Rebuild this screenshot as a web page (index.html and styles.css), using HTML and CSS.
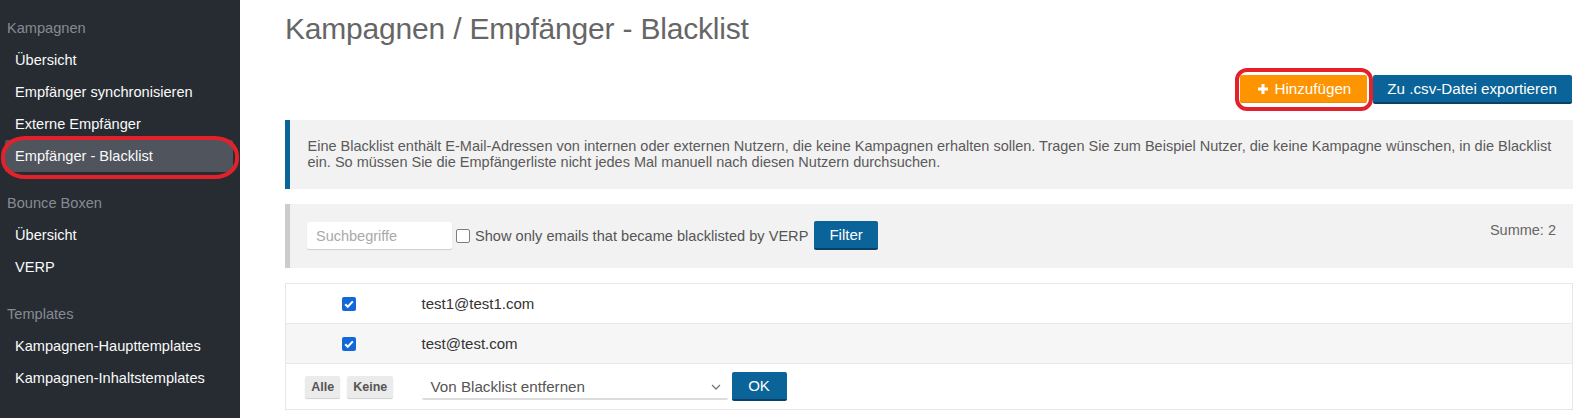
FILE: index.html
```html
<!DOCTYPE html>
<html lang="de">
<head>
<meta charset="utf-8">
<title>Kampagnen / Empfänger - Blacklist</title>
<link rel="stylesheet" href="styles.css">
</head>
<body>
<aside class="sidebar">
  <div class="section">
    <div class="sec-title">Kampagnen</div>
    <a class="nav-item">Übersicht</a>
    <a class="nav-item">Empfänger synchronisieren</a>
    <a class="nav-item">Externe Empfänger</a>
    <a class="nav-item active">Empfänger - Blacklist<span class="mark mark-nav"></span></a>
  </div>
  <div class="section">
    <div class="sec-title">Bounce Boxen</div>
    <a class="nav-item">Übersicht</a>
    <a class="nav-item">VERP</a>
  </div>
  <div class="section">
    <div class="sec-title">Templates</div>
    <a class="nav-item">Kampagnen-Haupttemplates</a>
    <a class="nav-item">Kampagnen-Inhaltstemplates</a>
  </div>
</aside>
<main class="main">
  <h1 class="title">Kampagnen / Empfänger - Blacklist</h1>
  <div class="actions">
    <button class="btn btn-orange"><svg class="plus" width="10" height="10" viewBox="0 0 10 10"><rect x="3.5" y="0" width="3" height="10" fill="#fff"/><rect x="0" y="3.5" width="10" height="3" fill="#fff"/></svg>Hinzufügen<span class="mark mark-btn"></span></button>
    <button class="btn btn-blue btn-export">Zu .csv-Datei exportieren</button>
  </div>
  <div class="info">Eine Blacklist enthält E-Mail-Adressen von internen oder externen Nutzern, die keine Kampagnen erhalten sollen. Tragen Sie zum Beispiel Nutzer, die keine Kampagne wünschen, in die Blacklist ein. So müssen Sie die Empfängerliste nicht jedes Mal manuell nach diesen Nutzern durchsuchen.</div>
  <div class="filter">
    <input class="search" type="text" placeholder="Suchbegriffe">
    <span class="cb cb-empty"></span>
    <span class="cb-label">Show only emails that became blacklisted by VERP</span>
    <button class="btn btn-blue btn-filter">Filter</button>
    <span class="total">Summe: 2</span>
  </div>
  <table class="list">
    <tr class="row">
      <td class="col-check"><span class="cb cb-checked"><svg width="14" height="14" viewBox="0 0 14 14"><path d="M3.2 7.2 L5.8 9.8 L10.8 4.4" fill="none" stroke="#fff" stroke-width="2"/></svg></span></td>
      <td class="col-mail">test1@test1.com</td>
    </tr>
    <tr class="row row-alt">
      <td class="col-check"><span class="cb cb-checked"><svg width="14" height="14" viewBox="0 0 14 14"><path d="M3.2 7.2 L5.8 9.8 L10.8 4.4" fill="none" stroke="#fff" stroke-width="2"/></svg></span></td>
      <td class="col-mail">test@test.com</td>
    </tr>
    <tr class="row row-actions">
      <td class="col-check"><div class="mini-group"><button class="mini">Alle</button><button class="mini">Keine</button></div></td>
      <td class="col-mail">
        <div class="bulk">
          <div class="select">Von Blacklist entfernen<svg class="chev" width="10" height="6" viewBox="0 0 10 6"><path d="M1 1 L5 5 L9 1" fill="none" stroke="#777" stroke-width="1.3"/></svg></div>
          <button class="btn btn-blue btn-ok">OK</button>
        </div>
      </td>
    </tr>
  </table>
</main>
</body>
</html>
```
FILE: styles.css
```css
* { box-sizing: border-box; }
html, body { margin: 0; padding: 0; }
body {
  display: flex;
  width: 1594px;
  height: 418px;
  overflow: hidden;
  font-family: "Liberation Sans", Arial, sans-serif;
  font-size: 14.5px;
  color: #555;
  background: #fff;
}
.sidebar {
  width: 240px;
  flex: none;
  background: #272c33;
  padding-top: 12px;
}
.section { margin-bottom: 15px; display: flex; flex-direction: column; }
.sec-title {
  height: 32px;
  line-height: 32px;
  padding-left: 7px;
  color: #868b91;
  font-size: 14.6px;
}
.nav-item {
  position: relative;
  display: block;
  height: 32px;
  line-height: 32px;
  margin: 0 7px 0 5px;
  padding-left: 10px;
  color: #fafafa;
  font-size: 14.6px;
  border-radius: 2px;
}
.nav-item.active { background: #50555d; }
.mark {
  position: absolute;
  border: 4px solid #e3212b;
  pointer-events: none;
}
.mark-nav {
  top: -4px; bottom: -7px; left: -4px; right: -6px;
  border-radius: 24px / 20px;
}
.main {
  flex: 1;
  min-width: 0;
  padding: 11px 21px 0 45px;
  display: flex;
  flex-direction: column;
}
.title {
  margin: 0;
  font-size: 30px;
  line-height: 36px;
  font-weight: normal;
  color: #666;
  letter-spacing: -0.2px;
}
.actions {
  margin-top: 28px;
  display: flex;
  justify-content: flex-end;
  gap: 6px;
  padding-right: 1px;
}
.btn {
  font-family: "Liberation Sans", Arial, sans-serif;
  font-size: 15px;
  color: #fff;
  border: none;
  border-radius: 2px;
  cursor: pointer;
  display: inline-flex;
  align-items: center;
  justify-content: center;
}
.btn-orange {
  position: relative;
  height: 28px;
  padding: 0 16px 0 18px;
  background: #fd9400;
  border-bottom: 1px solid #e88a05;
  gap: 6px;
  font-size: 15.2px;
}
.mark-btn {
  top: -7px; bottom: -9px; left: -5px; right: -6px;
  border-radius: 12px;
}
.btn-blue {
  height: 29px;
  padding: 0 14px;
  background: #0a6399;
  border-bottom: 2px solid #0a3f66;
}
.btn-export {
  padding: 0 15px 0 14px;
  font-size: 15.2px;
}
.info {
  margin-top: 16px;
  background: #f2f2f2;
  border-left: 5px solid #0a6399;
  padding: 17.5px 17px 18px 17.5px;
  line-height: 16.6px;
  color: #5a5a5a;
}
.filter {
  margin-top: 15px;
  background: #f2f2f2;
  border-left: 5px solid #cccccc;
  height: 64px;
  padding: 17px 17px 17px 17px;
  display: flex;
  align-items: center;
}
.search {
  width: 145px;
  height: 27px;
  border: none;
  border-radius: 2px;
  background: #fff;
  box-shadow: 0 1px 1px rgba(0,0,0,0.15);
  padding: 0 9px;
  font-family: "Liberation Sans", Arial, sans-serif;
  font-size: 14.5px;
  color: #555;
  outline: none;
}
.search::placeholder { color: #a9a9a9; }
.cb {
  display: inline-block;
  flex: none;
  border-radius: 2px;
}
.cb-empty {
  width: 14px;
  height: 14px;
  margin-left: 4px;
  background: #fff;
  border: 1.5px solid #7d7d85;
}
.cb-label {
  margin-left: 5px;
  color: #555;
  white-space: nowrap;
  font-size: 14.6px;
}
.btn-filter {
  margin-left: 6px;
  height: 29px;
  padding: 0 15px;
}
.total {
  margin-left: auto;
  align-self: flex-start;
  line-height: 16.6px;
  padding-top: 1px;
  color: #666;
}
.list {
  margin-top: 15.5px;
  width: 100%;
  border-collapse: collapse;
  border: 1px solid #e6e6e6;
}
.row td { border-top: 1px solid #e8e8e8; vertical-align: middle; }
.row { height: 40px; }
.row-alt { background: #f6f6f6; }
.row-actions { height: 46px; }
.col-check {
  width: 126px;
  text-align: center;
  padding: 0;
}
.col-mail {
  padding: 0 0 0 10px;
  color: #333;
  font-size: 15px;
}
.cb-checked {
  width: 14px;
  height: 14px;
  background: #1467d8;
  vertical-align: middle;
  line-height: 0;
  position: relative;
  top: -1px;
}
.mini-group {
  display: flex;
  justify-content: center;
  gap: 7px;
  padding-left: 1px;
}
.mini {
  height: 22px;
  padding: 0 6px;
  border: none;
  border-radius: 2px;
  background: #ebebeb;
  box-shadow: 0 1px 1px rgba(0,0,0,0.2);
  font-family: "Liberation Sans", Arial, sans-serif;
  font-size: 12.5px;
  font-weight: bold;
  color: #555;
}
.bulk {
  display: flex;
  align-items: center;
  gap: 4px;
}
.select {
  width: 306px;
  height: 27px;
  background: #fff;
  border-bottom: 2px solid #dcdcdc;
  border-radius: 2px;
  padding: 2px 7px 0 9px;
  display: flex;
  align-items: center;
  justify-content: space-between;
  color: #555;
  font-size: 15.2px;
}
.btn-ok {
  width: 55px;
  height: 29px;
  padding: 0;
}
```
